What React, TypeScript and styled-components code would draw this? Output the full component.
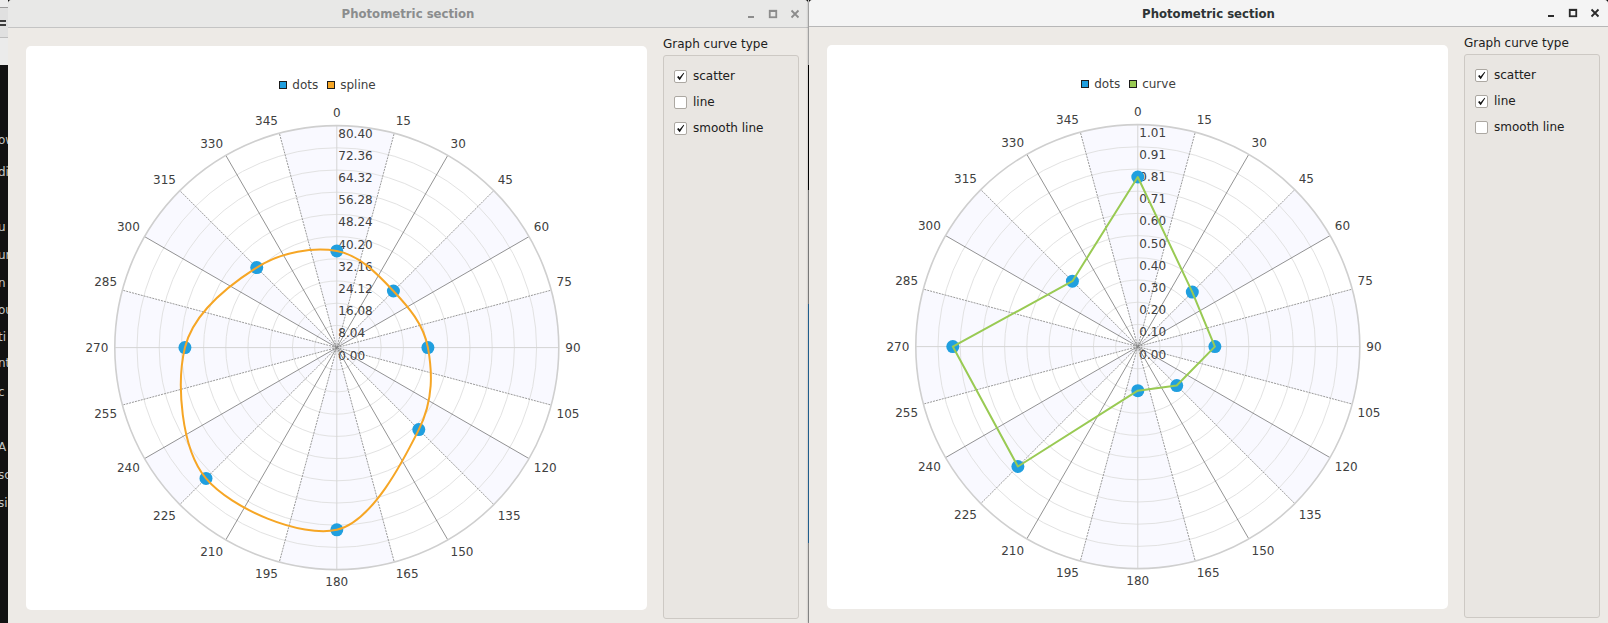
import React from "react";
import styled, { createGlobalStyle } from "styled-components";

const FONT = `"DejaVu Sans", Verdana, sans-serif`;

const GlobalStyle = createGlobalStyle`
  html, body { margin: 0; padding: 0; background: #121212; }
  body { font-family: ${FONT}; overflow: hidden; }
`;

/* ---------- desktop & background app ---------- */

const Desktop = styled.div`
  width: 1608px;
  height: 623px;
  overflow: hidden;
  display: flex;
  align-items: flex-start;
  background: #121212;
`;

const BackApp = styled.div`
  width: 8px;
  height: 623px;
  flex: none;
  display: flex;
  flex-direction: column;
  overflow: hidden;
  background: #121212;
`;

const BackBar = styled.div<{ $h: number; $bg: string; $line?: string }>`
  height: ${(p) => p.$h}px;
  flex: none;
  background: ${(p) => p.$bg};
  border-bottom: ${(p) => (p.$line ? `1px solid ${p.$line}` : "none")};
  display: flex;
  align-items: center;
`;

const BackGlyph = styled.span`
  width: 6px;
  height: 10px;
  background: linear-gradient(#3c3c3c, #3c3c3c) 0 2px / 6px 2px no-repeat,
    linear-gradient(#3c3c3c, #3c3c3c) 0 6px / 6px 2px no-repeat;
`;

const BackItem = styled.div<{ $mt: number }>`
  margin-top: ${(p) => p.$mt}px;
  height: 16px;
  line-height: 16px;
  font-size: 12px;
  color: #c4c4c4;
  white-space: nowrap;
  margin-left: -2px;
`;

const Seam = styled.div`
  width: 1px;
  height: 623px;
  flex: none;
  display: flex;
  flex-direction: column;
`;

const SeamPart = styled.div<{ $h: number; $c: string }>`
  height: ${(p) => p.$h}px;
  background: ${(p) => p.$c};
  flex: none;
`;

/* ---------- window chrome ---------- */

const Window = styled.div<{ $w: number; $active?: boolean }>`
  width: ${(p) => p.$w}px;
  height: 623px;
  flex: none;
  display: flex;
  flex-direction: column;
  background: #edeae6;
  overflow: hidden;
  border-radius: 4px 4px 0 0;
  box-shadow: ${(p) => (p.$active ? "-1px 0 2px rgba(0,0,0,0.3)" : "none")};
  position: relative;
`;

const TitleBar = styled.div<{ $active?: boolean; $h: number }>`
  height: ${(p) => p.$h}px;
  flex: none;
  display: grid;
  grid-template-columns: 1fr auto 1fr;
  align-items: center;
  background: ${(p) => (p.$active ? "#f4f4f4" : "#e8e8e7")};
  border-bottom: 1px solid ${(p) => (p.$active ? "#b7b7b7" : "#c4c4c4")};
`;

const Title = styled.div<{ $active?: boolean }>`
  grid-column: 2;
  font-family: "DejaVu Sans Condensed", "DejaVu Sans", sans-serif;
  font-stretch: condensed;
  font-weight: bold;
  font-size: 13px;
  color: ${(p) => (p.$active ? "#2e3436" : "#8b8d8e")};
  white-space: nowrap;
`;

const Controls = styled.div`
  grid-column: 3;
  justify-self: end;
  display: flex;
  padding-right: 2px;
`;

const CtrlButton = styled.div`
  width: 22px;
  height: 14px;
  display: flex;
  align-items: center;
  justify-content: center;
`;

const Body = styled.div<{ $pr: number }>`
  display: flex;
  gap: 7px;
  padding: 9px ${(p) => p.$pr}px 9px 9px;
  height: 600px;
  box-sizing: border-box;
  flex: none;
`;

const ChartView = styled.div`
  padding: 9px;
  flex: none;
`;

const ChartCard = styled.div`
  width: 621px;
  height: 564px;
  background: #ffffff;
  border-radius: 5px;
  display: flex;
  flex-direction: column;
  align-items: center;
`;

const Legend = styled.div`
  margin-top: 31px;
  height: 16px;
  padding-right: 18px;
  display: flex;
  align-items: center;
  gap: 9px;
  font-size: 12px;
  color: #404040;
`;

const LegendItem = styled.div`
  display: flex;
  align-items: center;
  gap: 5px;
`;

const Swatch = styled.span<{ $c: string }>`
  width: 8px;
  height: 8px;
  box-sizing: border-box;
  border: 1px solid #1c1c1c;
  background: ${(p) => p.$c};
`;

const PlotSvg = styled.svg`
  display: block;
  flex: none;
`;

/* ---------- side panel ---------- */

const SidePanel = styled.div`
  width: 136px;
  flex: none;
  display: flex;
  flex-direction: column;
`;

const GroupTitle = styled.div`
  height: 14px;
  line-height: 14px;
  font-size: 12px;
  color: #202020;
  margin-bottom: 4px;
  white-space: nowrap;
`;

const GroupBox = styled.div`
  flex: 1;
  border: 1px solid #cdc9c4;
  border-radius: 3px;
  background: #e9e6e2;
  padding: 7px 0 0 10px;
  display: flex;
  flex-direction: column;
`;

const CheckRow = styled.label`
  height: 26px;
  display: flex;
  align-items: center;
  gap: 6px;
  font-size: 12px;
  color: #202020;
  white-space: nowrap;
`;

const CheckBox = styled.span`
  width: 13px;
  height: 13px;
  box-sizing: border-box;
  background: #ffffff;
  border: 1px solid #aca8a2;
  border-radius: 2px;
  display: flex;
  align-items: center;
  justify-content: center;
  font-size: 10px;
  line-height: 11px;
  color: #111;
`;

/* ---------- icons ---------- */

const MinIcon = ({ c }: { c: string }) => (
  <svg width="10" height="10" viewBox="0 0 10 10">
    <rect x="2" y="7" width="6" height="2" fill={c} />
  </svg>
);
const MaxIcon = ({ c }: { c: string }) => (
  <svg width="10" height="10" viewBox="0 0 10 10">
    <rect x="1.75" y="1.75" width="6.5" height="6.5" fill="none" stroke={c} strokeWidth="1.8" />
    <rect x="1" y="1" width="8" height="2" fill={c} />
  </svg>
);
const CloseIcon = ({ c }: { c: string }) => (
  <svg width="10" height="10" viewBox="0 0 10 10">
    <path d="M1.5 1.5 L8.5 8.5 M8.5 1.5 L1.5 8.5" stroke={c} strokeWidth="1.8" />
  </svg>
);
const CheckMark = () => (
  <svg width="9" height="9" viewBox="0 0 9 9">
    <path d="M1 5 L2.6 3.9 L3.6 5.6 L7.6 0.8 L8.2 1.3 L3.7 8.2 Z" fill="#111" />
  </svg>
);

/* ---------- polar chart ---------- */

const CW = 621;
const CH = 517;
const CX = 310.8;
const CY = 254.6;
const R = 222;

const rad = (d: number) => (d * Math.PI) / 180;
const pt = (a: number, r: number): [number, number] => [
  CX + r * Math.sin(rad(a)),
  CY - r * Math.cos(rad(a)),
];
const f = (n: number) => n.toFixed(2);

const SHADES: [number, number][] = [
  [345, 375],
  [45, 60],
  [75, 105],
  [120, 135],
  [165, 195],
  [225, 240],
  [255, 285],
  [300, 315],
];

function sector(a1: number, a2: number) {
  const p1 = pt(a1, R);
  const p2 = pt(a2, R);
  return `M${f(CX)},${f(CY)} L${f(p1[0])},${f(p1[1])} A${R},${R} 0 0 1 ${f(p2[0])},${f(p2[1])} Z`;
}

function angLabel(a: number, text: string) {
  const w = text.length * 7.63;
  const h = 14;
  const [px, py] = pt(a, R + 5.5);
  let x: number;
  let y: number;
  if (a === 0) {
    x = px - w / 2;
    y = py - h;
  } else if (a < 90) {
    x = px;
    y = py - h;
  } else if (a === 90) {
    x = px + 1;
    y = py - h / 2;
  } else if (a < 180) {
    x = px;
    y = py;
  } else if (a === 180) {
    x = px - w / 2;
    y = py;
  } else if (a < 270) {
    x = px - w;
    y = py;
  } else if (a === 270) {
    x = px - w - 1;
    y = py - h / 2;
  } else {
    x = px - w;
    y = py - h;
  }
  return { x: x + w / 2, y: y + 11.1 };
}

function spline(pts: [number, number][]) {
  const n = pts.length;
  let d = `M${f(pts[0][0])},${f(pts[0][1])}`;
  for (let i = 0; i < n; i++) {
    const p0 = pts[(i - 1 + n) % n];
    const p1 = pts[i];
    const p2 = pts[(i + 1) % n];
    const p3 = pts[(i + 2) % n];
    const c1 = [p1[0] + (p2[0] - p0[0]) / 6, p1[1] + (p2[1] - p0[1]) / 6];
    const c2 = [p2[0] - (p3[0] - p1[0]) / 6, p2[1] - (p3[1] - p1[1]) / 6];
    d += ` C${f(c1[0])},${f(c1[1])} ${f(c2[0])},${f(c2[1])} ${f(p2[0])},${f(p2[1])}`;
  }
  return d;
}

type ChartSpec = {
  max: number;
  values: number[];
  kind: "spline" | "line";
  color: string;
  name: string;
};

const ANGLES = Array.from({ length: 24 }, (_, i) => i * 15);

function spokeStyle(a: number) {
  if (a % 90 === 0) return { stroke: "#d4d4d4", width: 1, dash: undefined as string | undefined };
  if (a % 30 === 0) return { stroke: "#4a4a4a", width: 0.6, dash: undefined };
  return { stroke: "#9a9a9a", width: 1, dash: "2 1" };
}

const PolarChart = ({ spec }: { spec: ChartSpec }) => {
  const pts = spec.values.map((v, i) => pt(i * 45, (v / spec.max) * R));
  const lineD =
    spec.kind === "spline"
      ? spline(pts)
      : `M${pts.map((p) => `${f(p[0])},${f(p[1])}`).join(" L")} Z`;
  return (
    <PlotSvg width={CW} height={CH} viewBox={`0 0 ${CW} ${CH}`}>
      {SHADES.map(([a1, a2]) => (
        <path key={a1} d={sector(a1, a2)} fill="#f9f9ff" />
      ))}
      {Array.from({ length: 9 }, (_, i) => (
        <circle key={i} cx={CX} cy={CY} r={(R * (i + 1)) / 10} fill="none" stroke="#e2e2e2" strokeWidth="1" />
      ))}
      {ANGLES.map((a) => {
        const s = spokeStyle(a);
        const [x, y] = pt(a, R);
        return (
          <line
            key={a}
            x1={CX}
            y1={CY}
            x2={x}
            y2={y}
            stroke={s.stroke}
            strokeWidth={s.width}
            strokeDasharray={s.dash}
          />
        );
      })}
      <circle cx={CX} cy={CY} r={R} fill="none" stroke="#cfcfcf" strokeWidth="1.6" />
      <g fontFamily={FONT} fontSize="12" fill="#404040">
        {ANGLES.map((a) => {
          const l = angLabel(a, String(a));
          return (
            <text key={a} x={l.x} y={l.y} textAnchor="middle">
              {a}
            </text>
          );
        })}
        {Array.from({ length: 11 }, (_, k) => (
          <text key={k} x={CX + 1.5} y={CY - (R * k) / 10 + 12}>
            {((spec.max * k) / 10).toFixed(2)}
          </text>
        ))}
      </g>
      {pts.map((p, i) => (
        <circle key={i} cx={p[0]} cy={p[1]} r="6.5" fill="#209fdf" />
      ))}
      <path d={lineD} fill="none" stroke={spec.color} strokeWidth="2" strokeLinejoin="round" />
    </PlotSvg>
  );
};

/* ---------- window ---------- */

type WinProps = {
  width: number;
  active?: boolean;
  titleH: number;
  padRight: number;
  spec: ChartSpec;
  checks: [boolean, boolean, boolean];
};

const PhotometricWindow = ({ width, active, titleH, padRight, spec, checks }: WinProps) => {
  const ic = active ? "#2a2a2a" : "#8c8c8c";
  const labels = ["scatter", "line", "smooth line"];
  return (
    <Window $w={width} $active={active}>
      <TitleBar $active={active} $h={titleH}>
        <Title $active={active}>Photometric section</Title>
        <Controls>
          <CtrlButton>
            <MinIcon c={ic} />
          </CtrlButton>
          <CtrlButton>
            <MaxIcon c={ic} />
          </CtrlButton>
          <CtrlButton>
            <CloseIcon c={ic} />
          </CtrlButton>
        </Controls>
      </TitleBar>
      <Body $pr={padRight}>
        <ChartView>
          <ChartCard>
            <Legend>
              <LegendItem>
                <Swatch $c="#209fdf" />
                dots
              </LegendItem>
              <LegendItem>
                <Swatch $c={spec.color} />
                {spec.name}
              </LegendItem>
            </Legend>
            <PolarChart spec={spec} />
          </ChartCard>
        </ChartView>
        <SidePanel>
          <GroupTitle>Graph curve type</GroupTitle>
          <GroupBox>
            {labels.map((l, i) => (
              <CheckRow key={l}>
                <CheckBox>{checks[i] && <CheckMark />}</CheckBox>
                {l}
              </CheckRow>
            ))}
          </GroupBox>
        </SidePanel>
      </Body>
    </Window>
  );
};

const BACK_ITEMS: [number, string][] = [
  [67, "ow"],
  [16, "di"],
  [39, "u"],
  [12, "ur"],
  [12, "n"],
  [11, "ou"],
  [11, "ti"],
  [10, "nt"],
  [13, "c"],
  [39, "A"],
  [12, "sc"],
  [12, "si"],
];

const leftSpec: ChartSpec = {
  max: 80.4,
  values: [35, 29, 33, 42, 66, 67, 55, 41],
  kind: "spline",
  color: "#f6a625",
  name: "spline",
};

const rightSpec: ChartSpec = {
  max: 1.008,
  values: [0.77, 0.35, 0.35, 0.25, 0.2, 0.77, 0.84, 0.42],
  kind: "line",
  color: "#99ca53",
  name: "curve",
};

export default function App() {
  return (
    <>
      <GlobalStyle />
      <Desktop>
        <BackApp>
          <BackBar $h={7} $bg="#ececec" $line="#9c9c9c" />
          <BackBar $h={29} $bg="#e0e0e0" $line="#bdbdbd">
            <BackGlyph />
          </BackBar>
          <BackBar $h={27} $bg="#ebebeb" />
          {BACK_ITEMS.map(([mt, t], i) => (
            <BackItem key={i} $mt={mt}>
              {t}
            </BackItem>
          ))}
        </BackApp>
        <PhotometricWindow
          width={800}
          titleH={27}
          padRight={9}
          spec={leftSpec}
          checks={[true, false, true]}
        />
        <Seam>
          <SeamPart $h={65} $c="#cfcfcf" />
          <SeamPart $h={125} $c="#000000" />
          <SeamPart $h={114} $c="#9a9a9a" />
          <SeamPart $h={239} $c="#2a78b4" />
          <SeamPart $h={80} $c="#a8a8a8" />
        </Seam>
        <PhotometricWindow
          width={799}
          active
          titleH={26}
          padRight={8}
          spec={rightSpec}
          checks={[true, true, false]}
        />
      </Desktop>
    </>
  );
}
